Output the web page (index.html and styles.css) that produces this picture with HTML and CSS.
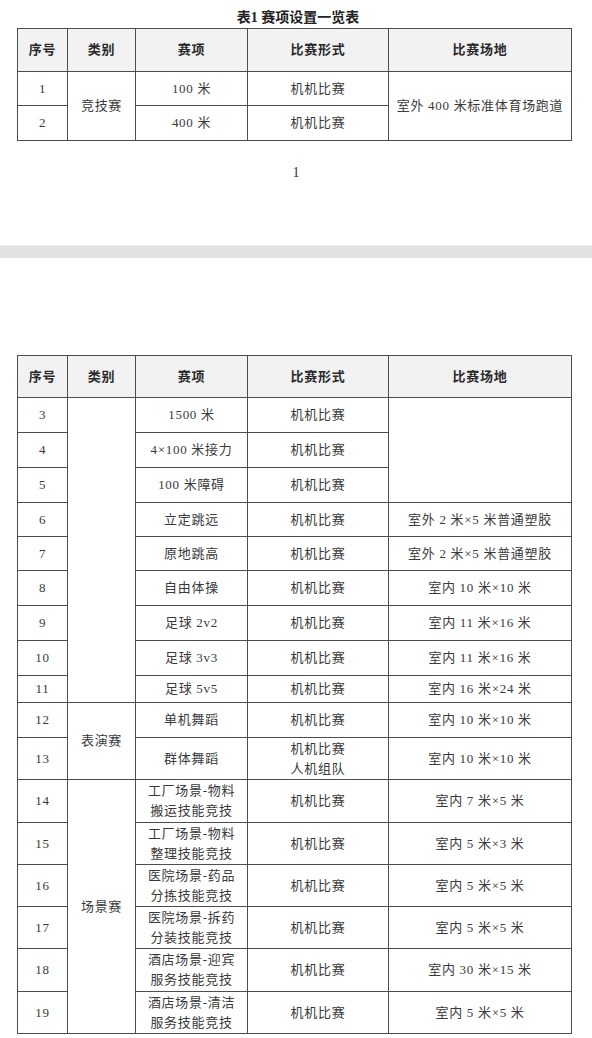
FILE: index.html
```html
<!DOCTYPE html>
<html lang="zh">
<head>
<meta charset="utf-8">
<link rel="stylesheet" href="styles.css">
</head>
<body>
<div class="page page-one">
  <div class="caption">表1 赛项设置一览表</div>
  <table class="grid">
    <colgroup>
      <col class="c1"><col class="c2"><col class="c3"><col class="c4"><col class="c5">
    </colgroup>
    <tr class="head h43"><th>序号</th><th>类别</th><th>赛项</th><th>比赛形式</th><th>比赛场地</th></tr>
    <tr class="h34"><td>1</td><td rowspan="2">竞技赛</td><td>100 米</td><td>机机比赛</td><td rowspan="2">室外 400 米标准体育场跑道</td></tr>
    <tr class="h35"><td>2</td><td>400 米</td><td>机机比赛</td></tr>
  </table>
  <div class="pagenum">1</div>
</div>
<div class="separator"></div>
<div class="page page-two">
  <table class="grid">
    <colgroup>
      <col class="c1"><col class="c2"><col class="c3"><col class="c4"><col class="c5">
    </colgroup>
    <tr class="head h42"><th>序号</th><th>类别</th><th>赛项</th><th>比赛形式</th><th>比赛场地</th></tr>
    <tr class="h35"><td>3</td><td rowspan="9"></td><td>1500 米</td><td>机机比赛</td><td rowspan="3"></td></tr>
    <tr class="h35"><td>4</td><td>4×100 米接力</td><td>机机比赛</td></tr>
    <tr class="h35"><td>5</td><td>100 米障碍</td><td>机机比赛</td></tr>
    <tr class="h34"><td>6</td><td>立定跳远</td><td>机机比赛</td><td>室外 2 米×5 米普通塑胶</td></tr>
    <tr class="h34"><td>7</td><td>原地跳高</td><td>机机比赛</td><td>室外 2 米×5 米普通塑胶</td></tr>
    <tr class="h35"><td>8</td><td>自由体操</td><td>机机比赛</td><td>室内 10 米×10 米</td></tr>
    <tr class="h35"><td>9</td><td>足球 2v2</td><td>机机比赛</td><td>室内 11 米×16 米</td></tr>
    <tr class="h35"><td>10</td><td>足球 3v3</td><td>机机比赛</td><td>室内 11 米×16 米</td></tr>
    <tr class="h27"><td>11</td><td>足球 5v5</td><td>机机比赛</td><td>室内 16 米×24 米</td></tr>
    <tr class="h35"><td>12</td><td rowspan="2">表演赛</td><td>单机舞蹈</td><td>机机比赛</td><td>室内 10 米×10 米</td></tr>
    <tr class="h42"><td>13</td><td>群体舞蹈</td><td>机机比赛<br>人机组队</td><td>室内 10 米×10 米</td></tr>
    <tr class="h43"><td>14</td><td rowspan="6">场景赛</td><td>工厂场景-物料<br>搬运技能竞技</td><td>机机比赛</td><td>室内 7 米×5 米</td></tr>
    <tr class="h42"><td>15</td><td>工厂场景-物料<br>整理技能竞技</td><td>机机比赛</td><td>室内 5 米×3 米</td></tr>
    <tr class="h42"><td>16</td><td>医院场景-药品<br>分拣技能竞技</td><td>机机比赛</td><td>室内 5 米×5 米</td></tr>
    <tr class="h42"><td>17</td><td>医院场景-拆药<br>分装技能竞技</td><td>机机比赛</td><td>室内 5 米×5 米</td></tr>
    <tr class="h43"><td>18</td><td>酒店场景-迎宾<br>服务技能竞技</td><td>机机比赛</td><td>室内 30 米×15 米</td></tr>
    <tr class="h42"><td>19</td><td>酒店场景-清洁<br>服务技能竞技</td><td>机机比赛</td><td>室内 5 米×5 米</td></tr>
  </table>
</div>
</body>
</html>
```

FILE: styles.css
```css
html, body {
  margin: 0;
  padding: 0;
  background: #ffffff;
}

body {
  font-family: "Liberation Serif", "Noto Sans CJK SC", serif;
  color: #3a3a3a;
}

.page {
  background: #ffffff;
}

.page-one {
  height: 245px;
  padding-top: 10px;
  box-sizing: border-box;
}

.caption {
  text-align: center;
  font-size: 14px;
  font-weight: bold;
  line-height: 16px;
  color: #222222;
  padding-left: 4px;
}

.grid {
  border-collapse: collapse;
  table-layout: fixed;
  width: 554px;
  margin-left: 17px;
  margin-top: 2px;
}

.c1 { width: 50px; }
.c2 { width: 68px; }
.c3 { width: 112px; }
.c4 { width: 141px; }
.c5 { width: 183px; }

.grid th,
.grid td {
  border: 1.5px solid #4d4d4d;
  padding: 0;
  text-align: center;
  vertical-align: middle;
  font-size: 13px;
  line-height: 20px;
  letter-spacing: 0.7px;
  font-weight: normal;
}

.grid th {
  background: #f2f2f2;
  font-weight: bold;
  color: #2a2a2a;
}

.h27 { height: 27px; }
.h34 { height: 34px; }
.h35 { height: 35px; }
.h42 { height: 42px; }
.h43 { height: 43px; }

.pagenum {
  text-align: center;
  font-size: 14px;
  line-height: 16px;
  margin-top: 24px;
  color: #333333;
}

.separator {
  height: 13px;
  background: #e2e2e2;
  border-top: 1px solid #ececec;
  box-sizing: border-box;
}

.page-two {
  padding-top: 95px;
  height: 780px;
  box-sizing: border-box;
}
```
